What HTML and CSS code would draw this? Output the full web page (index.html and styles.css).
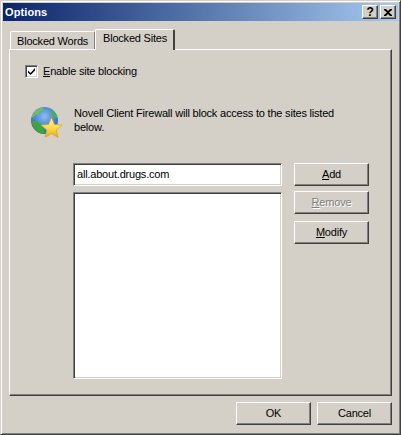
FILE: index.html
```html
<!DOCTYPE html>
<html lang="en">
<head>
  <meta charset="UTF-8">
  <title>Options</title>
  <link rel="stylesheet" href="styles.css">
</head>
<body>
  <div class="window">
    <div class="titlebar">
      <span class="title">Options</span>
      <div class="caption-btns">
        <div class="caption-btn help">?</div>
        <div class="caption-btn">
          <svg width="8" height="7" viewBox="0 0 8 7"><path d="M0 0h2l2 2 2-2h2v1L5 3.500 8 6v1H6L4 5 2 7H0V6l3-2.500L0 1z" fill="#000"/></svg>
        </div>
      </div>
    </div>

    <div class="content">
      <div class="tabs">
        <div class="tab">Blocked Words</div>
        <div class="tab active">Blocked Sites</div>
      </div>

      <div class="panel">
        <label class="check-row">
          <span class="checkbox">
            <svg width="9" height="9" viewBox="0 0 9 9"><path d="M1 3.500l2.500 2.500L8 1v2.500L3.500 8 1 5.500z" fill="#000"/></svg>
          </span>
          <span><u>E</u>nable site blocking</span>
        </label>

        <div class="info">
          <svg class="globe" width="32" height="32" viewBox="0 0 32 32">
            <defs>
              <radialGradient id="sea" cx="0.5" cy="0.35" r="0.7">
                <stop offset="0" stop-color="#8fbcec"/>
                <stop offset="0.6" stop-color="#3f7fd6"/>
                <stop offset="1" stop-color="#2a56a8"/>
              </radialGradient>
              <linearGradient id="star" x1="0" y1="0" x2="0" y2="1">
                <stop offset="0" stop-color="#fff4a8"/>
                <stop offset="0.55" stop-color="#fbd84a"/>
                <stop offset="1" stop-color="#eda915"/>
              </linearGradient>
            </defs>
            <circle cx="13.500" cy="13.500" r="13.500" fill="url(#sea)"/>
            <path d="M5 3.500C8 1 10 .5 12 .5c1 2-1 3-3 4-1 3-4 3-6 5-1 1-2 1-2.500 1C1 8 3 5 5 3.500z" fill="#6fbf5a"/>
            <path d="M.5 14c3-1 5 0 7 2 2 1 4 3 5 5 1 2 1 4 1 6C6 27 1 21 .5 14z" fill="#3fa53a"/>
            <path d="M19 2.500c3 1 6 4 7.500 8-2 1-4 0-5-2-1-1-3-3-2.500-6z" fill="#4fb044"/>
            <path d="M20.500 10.500L23.440 17.450 30.960 18.100 25.260 23.050 26.970 30.400 20.500 26.500 14.030 30.400 15.740 23.050 10.040 18.100 17.560 17.450z" fill="url(#star)" stroke="#d9a021" stroke-width="0.700" stroke-linejoin="round"/>
          </svg>
          <p class="info-text">Novell Client Firewall will block access to the sites listed below.</p>
        </div>

        <div class="form">
          <div class="fields">
            <div class="field site-input">all.about.drugs.com</div>
            <div class="field site-list"></div>
          </div>
          <div class="side-btns">
            <div class="btn"><span><u>A</u>dd</span></div>
            <div class="btn disabled"><span><u>R</u>emove</span></div>
            <div class="btn"><span><u>M</u>odify</span></div>
          </div>
        </div>
      </div>

      <div class="footer">
        <div class="btn">OK</div>
        <div class="btn">Cancel</div>
      </div>
    </div>
  </div>
</body>
</html>
```

FILE: styles.css
```css
html, body {
  margin: 0;
  padding: 0;
}
body {
  width: 401px;
  height: 435px;
  overflow: hidden;
  background: #d4d0c8;
  color: #000;
  font-family: "Liberation Sans", Arial, sans-serif;
  font-size: 11px;
  line-height: 13px;
  letter-spacing: -0.2px;
}
.window {
  box-sizing: border-box;
  width: 401px;
  height: 435px;
  padding: 2px;
  background: #d4d0c8;
  border-top: 1px solid #d4d0c8;
  border-left: 1px solid #d4d0c8;
  border-right: 1px solid #404040;
  border-bottom: 1px solid #404040;
  box-shadow: inset 1px 1px 0 #fff, inset -1px -1px 0 #808080;
  display: flex;
  flex-direction: column;
}
.titlebar {
  height: 18px;
  flex: none;
  display: flex;
  align-items: center;
  justify-content: space-between;
  padding: 0 2px;
  background: linear-gradient(90deg, #0a246a, #a6caf0);
}
.title {
  color: #fff;
  font-weight: bold;
  letter-spacing: 0.1px;
}
.caption-btns {
  display: flex;
  gap: 2px;
}
.caption-btn {
  box-sizing: border-box;
  width: 16px;
  height: 14px;
  display: flex;
  align-items: center;
  justify-content: center;
  background: #d4d0c8;
  border-top: 1px solid #fff;
  border-left: 1px solid #fff;
  border-right: 1px solid #404040;
  border-bottom: 1px solid #404040;
  box-shadow: inset -1px -1px 0 #808080;
}
.help {
  font-weight: bold;
  font-size: 12px;
}
.content {
  flex: 1;
  display: flex;
  flex-direction: column;
  padding: 8px 6px 0 6px;
}
.tabs {
  display: flex;
  align-items: flex-end;
  height: 20px;
  margin-left: 1px;
  position: relative;
  z-index: 1;
}
.tab {
  box-sizing: border-box;
  height: 18px;
  width: 85px;
  padding: 3px 0 0 6px;
  border-top: 1px solid #fff;
  border-left: 1px solid #fff;
  border-right: 1px solid #808080;
  border-radius: 2px 2px 0 0;
  white-space: nowrap;
}
.tab.active {
  height: 21px;
  width: 80px;
  margin-bottom: -1px;
  padding: 2px 0 0 7px;
  background: #d4d0c8;
  border-right: 2px solid #404040;
}
.panel {
  box-sizing: border-box;
  width: 383px;
  height: 347px;
  flex: none;
  padding: 15px 0 0 15px;
  border-top: 1px solid #fff;
  border-left: 1px solid #fff;
  border-right: 1px solid #404040;
  border-bottom: 1px solid #404040;
  box-shadow: inset -1px -1px 0 #808080;
}
.check-row {
  display: flex;
  align-items: center;
  gap: 5px;
  height: 13px;
}
.checkbox {
  box-sizing: border-box;
  width: 13px;
  height: 13px;
  display: flex;
  align-items: center;
  justify-content: center;
  background: #fff;
  border-top: 1px solid #808080;
  border-left: 1px solid #808080;
  border-right: 1px solid #fff;
  border-bottom: 1px solid #fff;
  box-shadow: inset 1px 1px 0 #404040, inset -1px -1px 0 #d4d0c8;
}
.info {
  display: flex;
  margin: 29px 0 0 6px;
  height: 56px;
}
.globe {
  flex: none;
  margin-right: 11px;
}
.info-text {
  margin: -1px 0 0;
  width: 270px;
  line-height: 14px;
}
.form {
  display: flex;
  gap: 12px;
  margin-left: 48px;
}
.fields {
  width: 209px;
  display: flex;
  flex-direction: column;
  gap: 6px;
}
.field {
  box-sizing: border-box;
  background: #fff;
  border-top: 1px solid #808080;
  border-left: 1px solid #808080;
  border-right: 1px solid #fff;
  border-bottom: 1px solid #fff;
  box-shadow: inset 1px 1px 0 #404040, inset -1px -1px 0 #d4d0c8;
}
.site-input {
  height: 23px;
  padding: 4px 0 0 3px;
}
.site-list {
  height: 187px;
}
.side-btns {
  display: flex;
  flex-direction: column;
  gap: 6px;
}
.btn {
  box-sizing: border-box;
  width: 75px;
  height: 23px;
  display: flex;
  align-items: center;
  justify-content: center;
  background: #d4d0c8;
  border-top: 1px solid #fff;
  border-left: 1px solid #fff;
  border-right: 1px solid #404040;
  border-bottom: 1px solid #404040;
  box-shadow: inset -1px -1px 0 #808080;
}
.btn.disabled {
  margin: -1px 0 1px;
  color: #808080;
  text-shadow: 1px 1px 0 #fff;
}
.footer {
  display: flex;
  justify-content: flex-end;
  gap: 6px;
  width: 383px;
  margin-top: 6px;
}
```
